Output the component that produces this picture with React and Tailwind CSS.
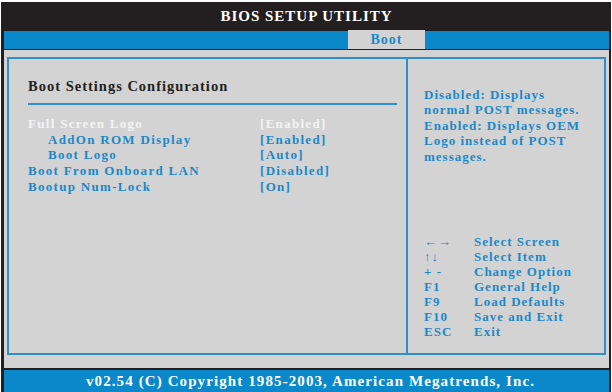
const font = { fontFamily: '"Liberation Serif", "Times New Roman", serif' }

const items = [
  { label: 'Full Screen Logo', value: '[Enabled]', active: true },
  { label: 'AddOn ROM Display', value: '[Enabled]', indent: true },
  { label: 'Boot Logo', value: '[Auto]', indent: true },
  { label: 'Boot From Onboard LAN', value: '[Disabled]' },
  { label: 'Bootup Num-Lock', value: '[On]' },
]

const keys = [
  ['\u2190\u2192', 'Select Screen'],
  ['\u2191\u2193', 'Select Item'],
  ['+ -', 'Change Option'],
  ['F1', 'General Help'],
  ['F9', 'Load Defaults'],
  ['F10', 'Save and Exit'],
  ['ESC', 'Exit'],
]

export default function App() {
  return (
    <div className="w-[612px] h-[392px] bg-white pt-[2px] pl-[1px] pr-[1px] overflow-hidden" style={font}>
      <div className="h-[390px] flex flex-col bg-[#231f20] px-[3px] pr-[2px]">
        {/* title */}
        <div className="h-[29px] flex items-center justify-center text-white font-bold text-[15px] tracking-[1px]">
          BIOS SETUP UTILITY
        </div>

        {/* tab bar */}
        <div className="h-[18px] bg-[#0a88c9] flex">
          <div className="w-[344px]" />
          <div className="w-[77px] -mt-[1px] h-[19px] bg-[#d3d3d3] flex items-center justify-center text-[#1b89c9] font-bold text-[14px] tracking-[1px]">
            Boot
          </div>
        </div>
        <div className="h-[1px] bg-[#231f20]" />

        {/* main */}
        <div className="h-[320px] bg-[#d3d3d3] pl-[3px] pr-[3px] pt-[7px] pb-[13px]">
          <div className="h-full flex border-2 border-[#2f8fcb]">
            <div className="w-[399px] border-r-2 border-[#2f8fcb] pl-[19px] pr-[9px] pt-[20px]">
              <div className="text-[#231f20] font-bold text-[14.5px] tracking-[1px] leading-[15px]">
                Boot Settings Configuration
              </div>
              <div className="h-[2px] bg-[#2f8fcb] mt-[9px] mb-[11px]" />
              <div className="flex flex-col">
                {items.map(it => (
                  <div key={it.label} className="flex h-[15.7px] items-center font-bold text-[13px] tracking-[1.3px]">
                    <span className={`w-[232px] ${it.indent ? 'pl-[20px]' : ''} ${it.active ? 'text-[#f4f4f4]' : 'text-[#1b89c9]'}`}>
                      {it.label}
                    </span>
                    <span className={it.active ? 'text-[#f4f4f4]' : 'text-[#1b89c9]'}>{it.value}</span>
                  </div>
                ))}
              </div>
            </div>

            <div className="flex-1 flex flex-col justify-between pl-[16px] pt-[28px] pb-[13px] text-[#1b89c9] font-bold text-[13px] tracking-[1px]">
              <div className="leading-[15.5px]">
                Disabled: Displays<br />
                normal POST messages.<br />
                Enabled: Displays OEM<br />
                Logo instead of POST<br />
                messages.
              </div>
              <div className="flex flex-col">
                {keys.map(([k, d]) => (
                  <div key={k} className="flex h-[15px] items-center">
                    <span className="w-[50px]">{k}</span>
                    <span>{d}</span>
                  </div>
                ))}
              </div>
            </div>
          </div>
        </div>

        <div className="h-[2px] bg-[#231f20]" />
        {/* footer */}
        <div className="flex-1 bg-[#0a88c9] flex items-center justify-center pl-[8px] text-white font-bold text-[15px] tracking-[1.1px]">
          v02.54 (C) Copyright 1985-2003, American Megatrends, Inc.
        </div>
      </div>
    </div>
  )
}
